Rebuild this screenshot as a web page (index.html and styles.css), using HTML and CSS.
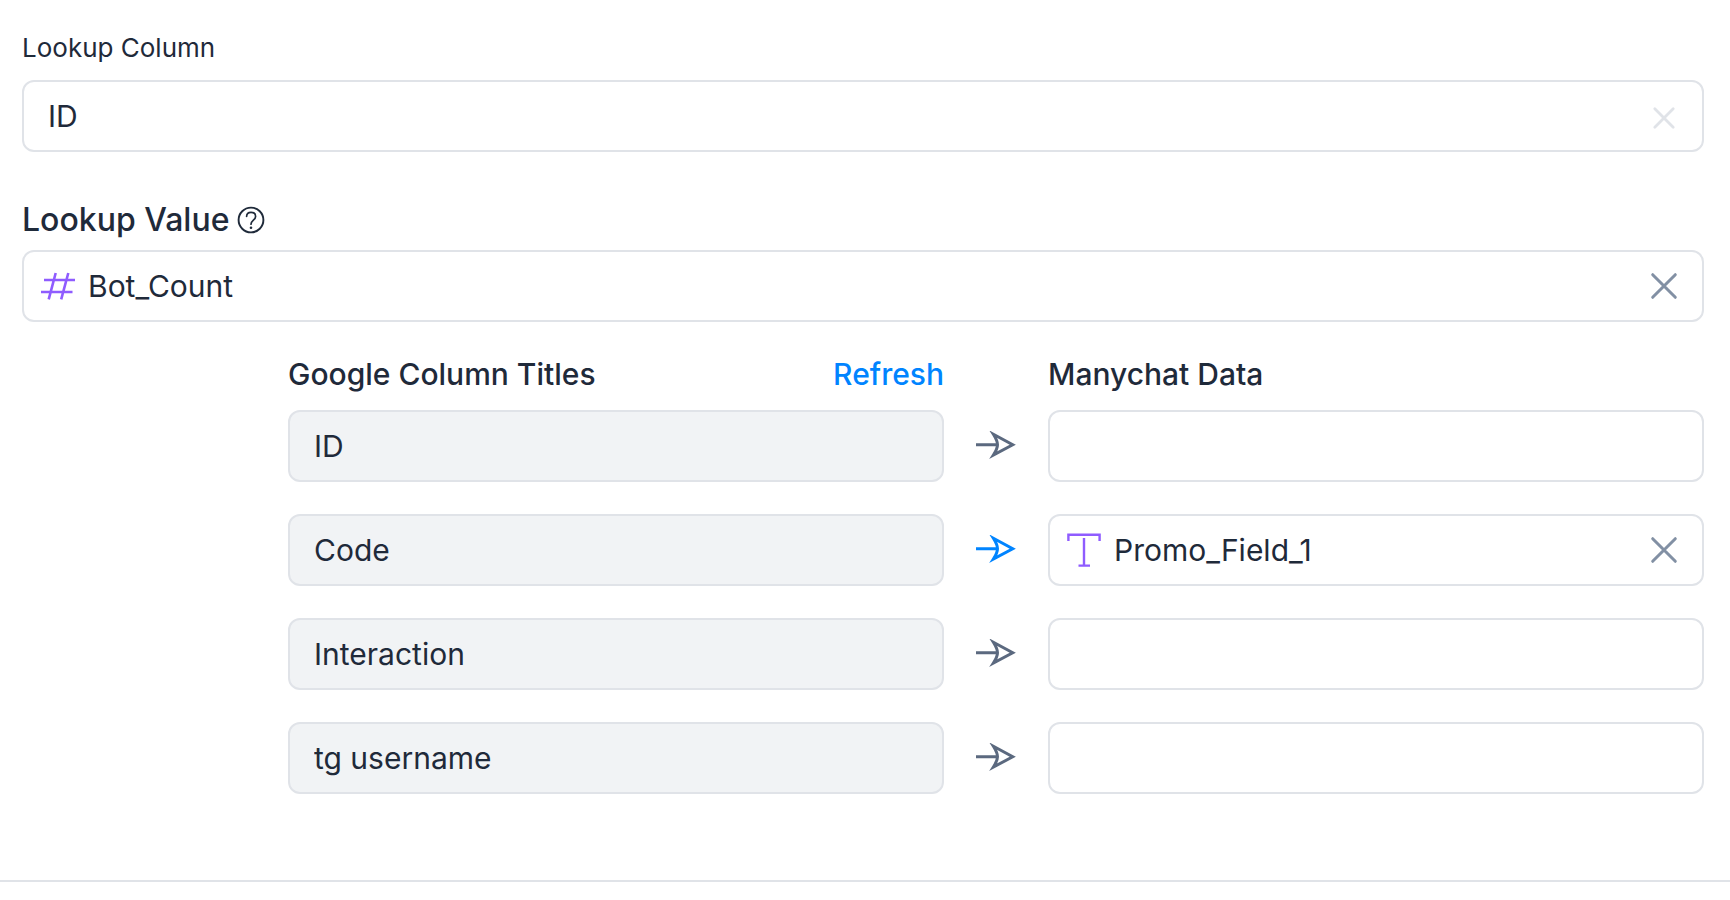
FILE: index.html
```html
<!DOCTYPE html>
<html lang="en">
<head>
<meta charset="utf-8">
<title>Lookup settings</title>
<link rel="stylesheet" href="styles.css">
</head>
<body>
<svg class="sprite" aria-hidden="true">
  <symbol id="close" viewBox="0 0 40 40"><path d="M8.7 8.7 31.3 31.3M31.3 8.7 8.7 31.3" fill="none" stroke="currentColor" stroke-width="3" stroke-linecap="round"/></symbol>
  <symbol id="close-small" viewBox="0 0 40 40"><path d="M10.8 12.8 29.2 31.2M29.2 12.8 10.8 31.2" fill="none" stroke="currentColor" stroke-width="2.8" stroke-linecap="round"/></symbol>
  <symbol id="arrow" viewBox="0 0 40 30"><path d="M0 13.7H21.5M17.4 3.3 36.7 13.7 17.4 24.1Q21.5 17.5 21.5 13.7 21.5 9.9 17.4 3.3Z" fill="none" stroke="currentColor" stroke-width="3" stroke-miterlimit="8"/></symbol>
</svg>
<main class="settings">
  <label class="label" for="lookup-column">Lookup Column</label>
  <div class="field">
    <input class="input" id="lookup-column" type="text" value="ID">
    <button class="clear clear-muted" type="button" aria-label="Clear lookup column"><svg class="clear-icon"><use href="#close-small"/></svg></button>
  </div>

  <div class="label-row">
    <label class="label-strong" for="lookup-value">Lookup Value</label>
    <svg class="help" viewBox="0 0 28 28" role="img" aria-label="Help"><g fill="none" stroke="currentColor"><circle cx="14" cy="14" r="12.4" stroke-width="1.9"/><path d="M9.6 10.5C9.7 7.7 11.4 6.4 14 6.4c2.7 0 4.6 1.6 4.6 4 0 3.6-4.6 3.8-4.6 7.8" stroke-width="1.7" stroke-linecap="round"/></g><circle cx="14" cy="21.7" r="1.3" fill="currentColor"/></svg>
  </div>
  <div class="field">
    <svg class="type-icon" viewBox="0 0 36 36" aria-hidden="true"><path d="M4 12H35M1 24H32.5M15.7 5 8.7 31.3M28.3 5 21.2 31.3" fill="none" stroke="currentColor" stroke-width="2.6"/></svg>
    <input class="input" id="lookup-value" type="text" value="Bot_Count">
    <button class="clear" type="button" aria-label="Clear lookup value"><svg class="clear-icon"><use href="#close"/></svg></button>
  </div>

  <section class="mapping">
    <div class="pair pair-head">
      <div class="column-head">
        <h2 class="title">Google Column Titles</h2>
        <button class="refresh" type="button">Refresh</button>
      </div>
      <h2 class="title title-data">Manychat Data</h2>
    </div>
    <div class="pair">
      <div class="field field-fixed"><input class="input" type="text" value="ID" aria-label="Column 1" readonly></div>
      <svg class="arrow"><use href="#arrow"/></svg>
      <div class="field"><input class="input" type="text" aria-label="Data for ID"></div>
    </div>
    <div class="pair">
      <div class="field field-fixed"><input class="input" type="text" value="Code" aria-label="Column 2" readonly></div>
      <svg class="arrow arrow-active"><use href="#arrow"/></svg>
      <div class="field">
        <svg class="type-icon" viewBox="0 0 36 36" aria-hidden="true"><path d="M2.4 9V2.7H33.6V9M18 6V33M12.5 33.6H24" fill="none" stroke="currentColor" stroke-width="2.4"/></svg>
        <input class="input" type="text" value="Promo_Field_1" aria-label="Data for Code">
        <button class="clear" type="button" aria-label="Clear data for Code"><svg class="clear-icon"><use href="#close"/></svg></button>
      </div>
    </div>
    <div class="pair">
      <div class="field field-fixed"><input class="input" type="text" value="Interaction" aria-label="Column 3" readonly></div>
      <svg class="arrow"><use href="#arrow"/></svg>
      <div class="field"><input class="input" type="text" aria-label="Data for Interaction"></div>
    </div>
    <div class="pair">
      <div class="field field-fixed"><input class="input" type="text" value="tg username" aria-label="Column 4" readonly></div>
      <svg class="arrow"><use href="#arrow"/></svg>
      <div class="field"><input class="input" type="text" aria-label="Data for tg username"></div>
    </div>
  </section>
</main>
</body>
</html>
```
FILE: styles.css
```css
* {
  box-sizing: border-box;
}

body {
  margin: 0;
  background: #fff;
  color: #1f2a3a;
  font-family: Inter, "Liberation Sans", sans-serif;
  font-size: 30px;
  line-height: 40px;
}

.sprite {
  display: none;
}

.settings {
  padding: 32px 26px 86px 22px;
  border-bottom: 2px solid #e0e3e8;
}

.label {
  display: block;
  margin-bottom: 16px;
  font-size: 26px;
  line-height: 32px;
}

.label-row {
  display: flex;
  align-items: center;
  gap: 8px;
  margin: 48px 0 10px;
}

.label-strong {
  font-size: 32px;
  font-weight: 500;
}

.help {
  width: 28px;
  height: 28px;
}

.field {
  display: flex;
  align-items: center;
  min-width: 0;
  height: 72px;
  border: 2px solid #e0e3e8;
  border-radius: 12px;
  background: #fff;
}

.field-fixed {
  background: #f1f3f5;
}

.input {
  flex: 1;
  min-width: 0;
  height: 100%;
  padding: 0 0 0 24px;
  border: 0;
  outline: 0;
  background: transparent;
  color: inherit;
  font: inherit;
}

.type-icon {
  flex: none;
  width: 36px;
  height: 36px;
  margin-left: 16px;
  color: #8f5cff;
}

.type-icon + .input {
  padding-left: 12px;
}

.clear {
  flex: none;
  width: 40px;
  height: 40px;
  margin-right: 18px;
  padding: 0;
  border: 0;
  background: none;
  color: #8290a4;
}

.clear-muted {
  color: #e0e3e8;
}

.clear-icon {
  display: block;
  width: 40px;
  height: 40px;
}

.mapping {
  display: grid;
  gap: 32px;
  margin: 32px 0 0 266px;
}

.pair {
  display: grid;
  grid-template-columns: 1fr 104px 1fr;
  align-items: center;
}

.pair-head {
  margin-bottom: -16px;
}

.column-head {
  display: flex;
  justify-content: space-between;
}

.title {
  margin: 0;
  font-size: 30px;
  font-weight: 500;
}

.title-data {
  grid-column: 3;
}

.refresh {
  padding: 0;
  border: 0;
  background: none;
  color: #0084ff;
  font: inherit;
  font-weight: 500;
}

.arrow {
  width: 40px;
  height: 30px;
  justify-self: center;
  color: #5b697f;
}

.arrow-active {
  color: #0084ff;
}
```
